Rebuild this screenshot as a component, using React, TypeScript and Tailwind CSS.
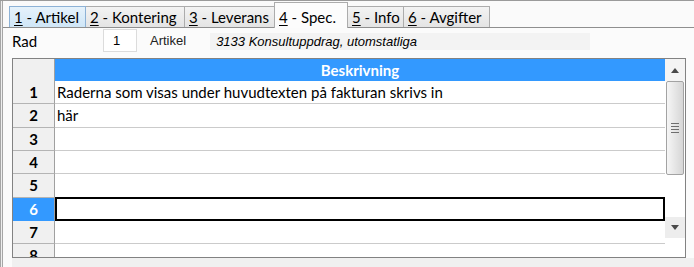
import React from "react"

const tabs = [
  { key: "1", label: " - Artikel", w: "w-[77px]", state: "hover" },
  { key: "2", label: " - Kontering", w: "w-[100px]", state: "" },
  { key: "3", label: " - Leverans", w: "w-[91px]", state: "" },
  { key: "4", label: " - Spec.", w: "w-[74px]", state: "active" },
  { key: "5", label: " - Info", w: "w-[57px]", state: "" },
  { key: "6", label: " - Avgifter", w: "w-[87px]", state: "" },
]

const rows = [
  "Raderna som visas under huvudtexten på fakturan skrivs in",
  "här",
  "",
  "",
  "",
  "",
  "",
  "",
]

const ui = { fontFamily: "Lato, 'Noto Sans', sans-serif" }
const arial = { fontFamily: "'Liberation Sans', Arial, sans-serif" }

function Tab({ t }: { t: (typeof tabs)[number] }) {
  if (t.state === "active") {
    return (
      <div
        className={`${t.w} -ml-px relative z-10 h-[26px] -mb-px flex items-start pt-[3px] pl-[4px] bg-[#fcfcfc] border border-b-0 border-[#acacac] text-[15px] text-black`}
      >
        <span className="underline underline-offset-2">{t.key}</span>
        <span className="whitespace-pre">{t.label}</span>
      </div>
    )
  }
  return (
    <div
      className={`${t.w} -ml-px h-[21px] flex items-center pl-[4px] border border-b-0 text-[15px] text-black ${
        t.state === "hover"
          ? "bg-gradient-to-b from-[#e6f2fb] to-[#cfe6f7] border-[#8db2d6] relative z-[5] ml-0"
          : "bg-gradient-to-b from-[#f3f3f3] to-[#e4e4e4] border-[#acacac]"
      }`}
    >
      <span className="underline underline-offset-2">{t.key}</span>
      <span className="whitespace-pre">{t.label}</span>
    </div>
  )
}

export default function App() {
  return (
    <div className="w-[694px] h-[267px] flex bg-[#fafafa] border-t border-[#9a9a9a] overflow-hidden" style={ui}>
      <div className="w-px bg-[#a6a6a6]" />
      <div className="w-px bg-[#eeeeee]" />
      <div className="flex-1 flex flex-col border-l border-[#a6a6a6]">
        {/* tab strip */}
        <div className="h-[27px] flex items-end pl-[6px] border-b border-[#8f8f8f]">
          {tabs.map((t) => (
            <Tab key={t.key} t={t} />
          ))}
        </div>

        {/* tab panel */}
        <div className="flex-1 flex flex-col bg-[#fbfbfb] pl-[9px]">
          <div className="h-[30px] flex items-start">
            <span className="w-[91px] pt-[2px] text-[15px] text-black">Rad</span>
            <div
              className="w-[34px] h-[23px] mt-px bg-white border border-[#dcdcdc] pl-[9px] flex items-center text-[13px] text-black"
              style={arial}
            >
              1
            </div>
            <span className="ml-[13px] pt-[3px] text-[13px] text-[#222]" style={arial}>
              Artikel
            </span>
            <div
              className="ml-[24px] mt-[5px] w-[380px] h-[17px] bg-[#f3f3f3] pl-[6px] leading-[17px] text-[13px] italic text-black"
              style={arial}
            >
              3133 Konsultuppdrag, utomstatliga
            </div>
          </div>

          {/* grid */}
          <div className="w-[674px] h-[200px] flex border border-[#828282] bg-white">
            <div className="w-[652px] flex flex-col overflow-hidden">
              <div className="h-[22px] flex shrink-0">
                <div className="w-[42px] bg-[#f0f0f0] border-r border-[#a0a0a0]" />
                <div className="flex-1 bg-[#3399ff] flex items-center justify-center text-[15px] font-bold text-white">
                  Beskrivning
                </div>
              </div>
              {rows.map((text, i) => {
                const sel = i === 5
                return (
                  <div key={i} className="h-[23.33px] flex shrink-0">
                    <div
                      className={`w-[42px] border-r border-b flex items-center justify-center text-[15px] font-bold ${
                        sel
                          ? "bg-[#3399ff] text-white border-r-[#a0a0a0] border-b-[#3399ff]"
                          : "bg-[#f0f0f0] text-black border-[#a0a0a0] border-b-[#b4b4b4]"
                      }`}
                    >
                      {i + 1}
                    </div>
                    <div className="flex-1 relative border-b border-[#cbcbcb] flex items-center pl-[2px] text-[15px] text-black">
                      {text}
                      {sel && <div className="absolute -top-px left-0 right-0 -bottom-px border-2 border-black" />}
                    </div>
                  </div>
                )
              })}
            </div>

            {/* vertical scrollbar */}
            <div className="w-[20px] flex flex-col bg-white">
              <div className="h-[22px] flex items-center justify-center bg-[#f4f4f4]">
                <svg width="8" height="5" viewBox="0 0 8 5">
                  <path d="M0 5 L4 0 L8 5 Z" fill="#4a4a4a" />
                </svg>
              </div>
              <div className="h-[94px] ml-px mr-px border border-[#a3a3a3] rounded-[2px] bg-gradient-to-r from-[#f6f6f6] to-[#d6d6d6] flex items-center justify-center">
                <div className="flex flex-col gap-[2px]">
                  <div className="w-[8px] h-px bg-[#6e6e6e]" />
                  <div className="w-[8px] h-px bg-[#6e6e6e]" />
                  <div className="w-[8px] h-px bg-[#6e6e6e]" />
                  <div className="w-[8px] h-px bg-[#6e6e6e]" />
                </div>
              </div>
              <div className="h-[42px] bg-white" />
              <div className="h-[21px] flex items-center justify-center bg-[#ededed]">
                <svg width="8" height="5" viewBox="0 0 8 5">
                  <path d="M0 0 L8 0 L4 5 Z" fill="#4a4a4a" />
                </svg>
              </div>
              <div className="flex-1 bg-white" />
            </div>
          </div>
          <div className="flex-1 bg-[#f0f0f0]" />
        </div>
      </div>
    </div>
  )
}
